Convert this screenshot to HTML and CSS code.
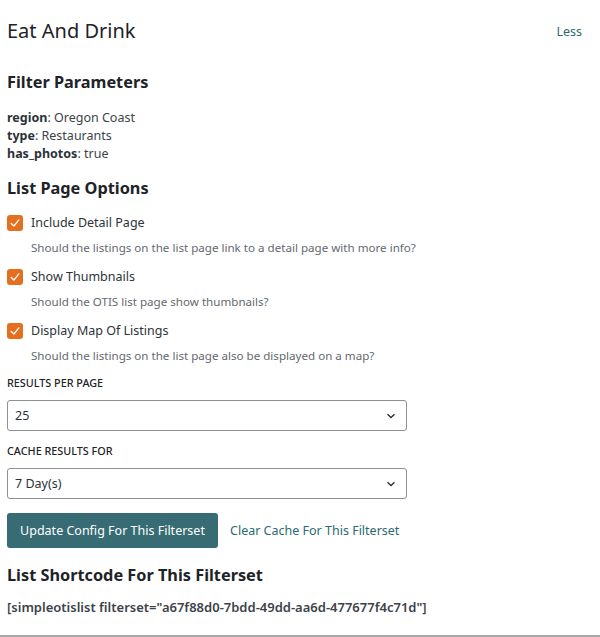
FILE: index.html
```html
<!DOCTYPE html>
<html>
<head>
<meta charset="utf-8">
<link rel="stylesheet" href="styles.css">
</head>
<body>
<div class="panel">
  <div class="head">
    <h1 class="title">Eat And Drink</h1>
    <a class="less" href="#">Less</a>
  </div>

  <h2 class="section">Filter Parameters</h2>
  <div class="params">
    <div><b>region</b>: Oregon Coast</div>
    <div><b>type</b>: Restaurants</div>
    <div><b>has_photos</b>: true</div>
  </div>

  <h2 class="section opts">List Page Options</h2>
  <div class="option">
    <label class="check"><span class="box"><svg viewBox="0 0 16 16" width="16" height="16"><path d="M4.2 8.4 L6.9 11.1 L11.8 4.9" fill="none" stroke="#fff" stroke-width="1.4" stroke-linecap="round" stroke-linejoin="round"/></svg></span>Include Detail Page</label>
    <p class="desc">Should the listings on the list page link to a detail page with more info?</p>
  </div>
  <div class="option">
    <label class="check"><span class="box"><svg viewBox="0 0 16 16" width="16" height="16"><path d="M4.2 8.4 L6.9 11.1 L11.8 4.9" fill="none" stroke="#fff" stroke-width="1.4" stroke-linecap="round" stroke-linejoin="round"/></svg></span>Show Thumbnails</label>
    <p class="desc">Should the OTIS list page show thumbnails?</p>
  </div>
  <div class="option">
    <label class="check"><span class="box"><svg viewBox="0 0 16 16" width="16" height="16"><path d="M4.2 8.4 L6.9 11.1 L11.8 4.9" fill="none" stroke="#fff" stroke-width="1.4" stroke-linecap="round" stroke-linejoin="round"/></svg></span>Display Map Of Listings</label>
    <p class="desc">Should the listings on the list page also be displayed on a map?</p>
  </div>

  <div class="field">
    <div class="flabel">RESULTS PER PAGE</div>
    <div class="select"><span>25</span><svg class="chev" viewBox="0 0 10 6" width="10" height="6"><path d="M1.5 1.2 L5 4.6 L8.5 1.2" fill="none" stroke="#2c3338" stroke-width="1.4"/></svg></div>
  </div>
  <div class="field">
    <div class="flabel">CACHE RESULTS FOR</div>
    <div class="select"><span>7 Day(s)</span><svg class="chev" viewBox="0 0 10 6" width="10" height="6"><path d="M1.5 1.2 L5 4.6 L8.5 1.2" fill="none" stroke="#2c3338" stroke-width="1.4"/></svg></div>
  </div>

  <div class="actions">
    <button class="btn">Update Config For This Filterset</button>
    <a class="link" href="#">Clear Cache For This Filterset</a>
  </div>

  <h2 class="section sc">List Shortcode For This Filterset</h2>
  <div class="code">[simpleotislist filterset="a67f88d0-7bdd-49dd-aa6d-477677f4c71d"]</div>
</div>
</body>
</html>
```
FILE: styles.css
```css
html, body { margin: 0; padding: 0; background: #fff; }
body {
  font-family: "Noto Sans", "Open Sans", sans-serif;
  color: #2c3338;
  font-size: 12.5px;
}
.panel {
  padding: 0 7px;
  border-bottom: 2px solid #a7a7a7;
  height: 637px;
  box-sizing: border-box;
}
.head {
  display: flex;
  justify-content: space-between;
  align-items: center;
  padding-top: 16px;
  padding-right: 11px;
}
.title {
  margin: 0;
  font-size: 20px;
  font-weight: 400;
  color: #1d2327;
  line-height: 30px;
}
.less { color: #2b6a74; text-decoration: none; font-size: 12.5px; }
.section {
  margin: 25px 0 0;
  font-size: 16.3px;
  font-weight: 700;
  color: #1d2327;
  line-height: 22px;
}
.params { margin-top: 16px; line-height: 18px; color: #3c434a; }
.params b { font-weight: 700; color: #2c3338; }
.section.opts { margin-top: 14px; }
.check {
  display: flex;
  align-items: center;
  gap: 8px;
  margin-top: 11px;
  line-height: 18px;
  color: #2c3338;
}
.opts + .option .check { margin-top: 15px; }
.box {
  width: 16px; height: 16px;
  background: #e4701f;
  border-radius: 3px;
  display: inline-flex;
}
.desc {
  margin: 7px 0 0 24px;
  color: #646970;
  font-size: 11.6px;
  line-height: 18px;
}
.field { margin-top: 11px; }
.flabel {
  font-size: 10.8px;
  font-weight: 500;
  color: #1d2327;
  line-height: 14px;
}
.field + .field { margin-top: 13px; }
.select {
  margin-top: 10px;
  width: 400px;
  height: 31px;
  box-sizing: border-box;
  border: 1px solid #8c8f94;
  border-radius: 3px;
  display: flex;
  align-items: center;
  justify-content: space-between;
  padding: 0 10px 0 7px;
  font-size: 12.5px;
  color: #2c3338;
}
.chev { margin-top: 1px; }
.actions {
  display: flex;
  align-items: center;
  gap: 12px;
  margin-top: 14px;
}
.btn {
  background: #376c75;
  color: #fff;
  border: 0;
  border-radius: 3px;
  height: 35px;
  padding: 0 11px;
  font-family: inherit;
  font-size: 12.5px;
  width: 211px;
}
.link { color: #2b6a74; text-decoration: none; font-size: 12.5px; }
.section.sc { margin-top: 16px; }
.code {
  margin-top: 12px;
  font-weight: 600;
  font-size: 13px;
  color: #3c434a;
}
```
